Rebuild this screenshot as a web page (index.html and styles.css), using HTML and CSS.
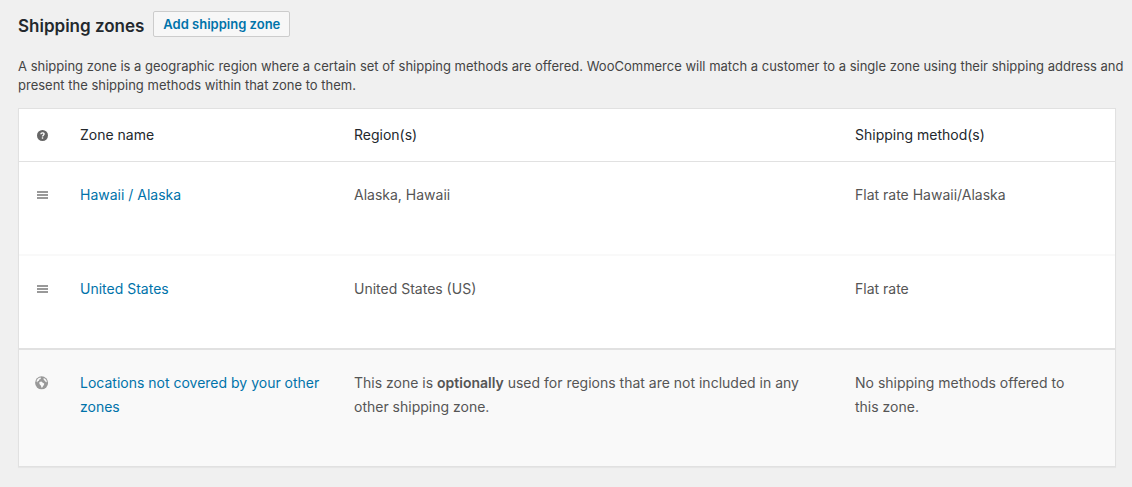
FILE: index.html
```html
<!DOCTYPE html>
<html lang="en">
<head>
    <meta charset="UTF-8">
    <meta name="viewport" content="width=device-width, initial-scale=1.0">
    <title>Shipping zones - WooCommerce</title>
    <link rel="stylesheet" href="styles.css">
</head>
<body>
    <div class="page-header">
        <h2>Shipping zones</h2>
        <button type="button" class="add-zone">Add shipping zone</button>
    </div>

    <p class="intro">A shipping zone is a geographic region where a certain set of shipping methods are offered. WooCommerce will match a customer to a single zone using their shipping address and present the shipping methods within that zone to them.</p>

    <table class="zones">
        <colgroup>
            <col class="col-icon">
            <col class="col-name">
            <col class="col-region">
            <col class="col-methods">
        </colgroup>
        <thead>
            <tr>
                <th class="icon-cell" scope="col">
                    <svg class="icon" viewBox="0 0 14 14" role="img" aria-label="Help">
                        <circle cx="7.5" cy="7.5" r="5.5" fill="#666"/>
                        <path d="M5.9 6.2C5.9 4.4 9.1 4.4 9.1 6.1C9.1 7.2 7.5 7.2 7.5 8.5" fill="none" stroke="#fff" stroke-width="1.4"/>
                        <rect x="6.8" y="9.3" width="1.4" height="1.4" fill="#fff"/>
                    </svg>
                </th>
                <th scope="col">Zone name</th>
                <th scope="col">Region(s)</th>
                <th scope="col">Shipping method(s)</th>
            </tr>
        </thead>
        <tbody>
            <tr>
                <td class="icon-cell">
                    <svg class="icon" viewBox="0 0 14 14" aria-hidden="true">
                        <path d="M2 3h11v2H2zM2 6h11v2H2zM2 9h11v2H2z" fill="#999"/>
                    </svg>
                </td>
                <td class="name-cell"><a href="#">Hawaii / Alaska</a></td>
                <td>Alaska, Hawaii</td>
                <td class="methods-cell">Flat rate Hawaii/Alaska</td>
            </tr>
            <tr>
                <td class="icon-cell">
                    <svg class="icon" viewBox="0 0 14 14" aria-hidden="true">
                        <path d="M2 3h11v2H2zM2 6h11v2H2zM2 9h11v2H2z" fill="#999"/>
                    </svg>
                </td>
                <td class="name-cell"><a href="#">United States</a></td>
                <td>United States (US)</td>
                <td class="methods-cell">Flat rate</td>
            </tr>
        </tbody>
        <tfoot>
            <tr>
                <td class="icon-cell">
                    <svg class="icon" viewBox="0 0 14 14" aria-hidden="true">
                        <circle cx="6.6" cy="6.8" r="6.5" fill="#999"/>
                        <path d="M1.5 5.2C1.9 3.3 3.4 1.8 5.3 1.4L6.1 2.1L5.3 3.2L4.2 3.6L3.9 4.7L2.7 5.2L2.2 6.4z" fill="#f9f9f9"/>
                        <path d="M4.6 6L6.4 5.6L7.5 6.6L9.2 7.4L9 8.9L8 10L7.6 11.3L6.4 11.8L6 9.8L4.8 8.5L4.2 7.1z" fill="#f9f9f9"/>
                        <path d="M8.5 2.1L10.2 2.8L11.5 4.4L11.9 6.3L10.7 6L9.9 4.8L8.8 4z" fill="#f9f9f9"/>
                    </svg>
                </td>
                <td class="name-cell"><a href="#">Locations not covered by your other zones</a></td>
                <td>This zone is <strong>optionally</strong> used for regions that are not included in any other shipping zone.</td>
                <td class="methods-cell">No shipping methods offered to this zone.</td>
            </tr>
        </tfoot>
    </table>
</body>
</html>
```
FILE: styles.css
```css
body {
    margin: 0;
    padding: 11px 16px 20px 18px;
    background: #f0f0f0;
    color: #444;
    font-family: Inter, Roboto, "Liberation Sans", sans-serif;
    font-size: 13px;
    line-height: 19px;
}

.page-header {
    display: flex;
    align-items: flex-start;
    gap: 9px;
}

h2 {
    margin: 0;
    color: #23282d;
    font-size: 17px;
    font-weight: 600;
    line-height: 30px;
}

.add-zone {
    height: 26px;
    padding: 0 9px;
    border: 1px solid #ccc;
    border-radius: 2px;
    background: #f7f7f7;
    color: #0073aa;
    font-family: inherit;
    font-size: 13px;
    font-weight: 600;
    line-height: 24px;
    cursor: pointer;
}

.add-zone:hover {
    border-color: #008ec2;
    background: #00a0d2;
    color: #fff;
}

.intro {
    margin: 16px -12px 13px 0;
}

.zones {
    width: 100%;
    table-layout: fixed;
    border: 1px solid #e1e1e1;
    border-spacing: 0;
    background: #fff;
    box-shadow: 0 1px 1px rgba(0, 0, 0, 0.04);
    color: #555;
    font-size: 14px;
    line-height: 24px;
}

.col-icon {
    width: 41px;
}

.col-name {
    width: 25%;
}

.col-methods {
    width: 280px;
}

.zones th,
.zones td {
    padding: 21px 20px 47px;
    text-align: left;
    vertical-align: top;
}

.zones th {
    padding: 14px 20px;
    border-bottom: 1px solid #e1e1e1;
    color: #23282d;
    font-weight: 400;
}

.zones tbody tr + tr td {
    border-top: 2px solid #f9f9f9;
}

.zones tfoot td {
    border-top: 2px solid #e1e1e1;
    background: #f9f9f9;
}

.zones .icon-cell {
    padding-right: 0;
    padding-left: 16px;
}

.zones .name-cell {
    padding-right: 8px;
}

.zones .methods-cell {
    padding-right: 40px;
}

.zones a {
    color: #0073aa;
    text-decoration: none;
}

.zones a:hover {
    color: #00a0d2;
}

.zones strong {
    font-weight: 600;
}

.icon {
    display: block;
    width: 14px;
    height: 14px;
    margin: 5px 0;
}
```
